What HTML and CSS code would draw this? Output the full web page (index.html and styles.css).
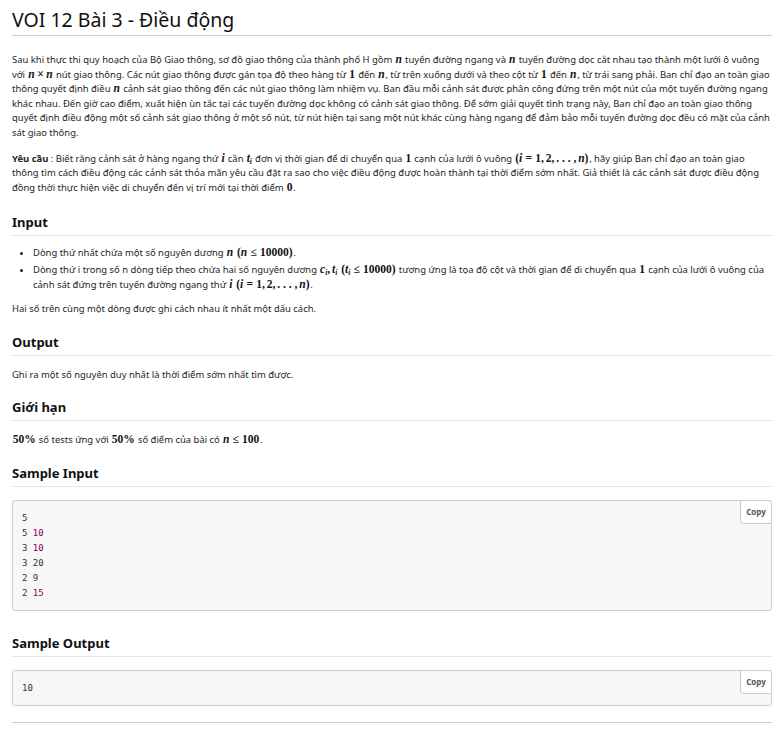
FILE: index.html
```html
<!DOCTYPE html>
<html lang="vi">
<head>
<meta charset="utf-8">
<title>VOI 12 Bài 3 - Điều động</title>
<link rel="stylesheet" href="styles.css">
</head>
<body>
<div class="page">
  <h1 class="title">VOI 12 Bài 3 - Điều động</h1>
  <div class="content">
    <p class="first">Sau khi thực thi quy hoạch của Bộ Giao thông, sơ đồ giao thông của thành phố H gồm <span class="math"><i>n</i></span> tuyến đường ngang và <span class="math"><i>n</i></span> tuyến đường dọc cắt nhau tạo thành một lưới ô vuông với <span class="math"><i>n</i><span class="bin">×</span><i>n</i></span> nút giao thông. Các nút giao thông được gán tọa độ theo hàng từ <span class="math">1</span> đến <span class="math"><i>n</i></span>, từ trên xuống dưới và theo cột từ <span class="math">1</span> đến <span class="math"><i>n</i></span>, từ trái sang phải. Ban chỉ đạo an toàn giao thông quyết định điều <span class="math"><i>n</i></span> cảnh sát giao thông đến các nút giao thông làm nhiệm vụ. Ban đầu mỗi cảnh sát được phân công đứng trên một nút của một tuyến đường ngang khác nhau. Đến giờ cao điểm, xuất hiện ùn tắc tại các tuyến đường dọc không có cảnh sát giao thông. Để sớm giải quyết tình trạng này, Ban chỉ đạo an toàn giao thông quyết định điều động một số cảnh sát giao thông ở một số nút, từ nút hiện tại sang một nút khác cùng hàng ngang để đảm bảo mỗi tuyến đường dọc đều có mặt của cảnh sát giao thông.</p>
    <p><b>Yêu cầu</b> : Biết rằng cảnh sát ở hàng ngang thứ <span class="math"><i>i</i></span> cần <span class="math"><i>t</i><sub><i>i</i></sub></span> đơn vị thời gian để di chuyển qua <span class="math">1</span> cạnh của lưới ô vuông <span class="math">(<i>i</i><span class="rel">=</span>1,<span class="th"></span>2,<span class="th"></span>. . . ,<span class="th"></span><i>n</i>)</span>, hãy giúp Ban chỉ đạo an toàn giao thông tìm cách điều động các cảnh sát thỏa mãn yêu cầu đặt ra sao cho việc điều động được hoàn thành tại thời điểm sớm nhất. Giả thiết là các cảnh sát được điều động đồng thời thực hiện việc di chuyển đến vị trí mới tại thời điểm <span class="math">0</span>.</p>

    <h2 class="sect sect-first">Input</h2>
    <ul class="list">
      <li>Dòng thứ nhất chứa một số nguyên dương <span class="math"><i>n</i></span> <span class="math">(<i>n</i><span class="rel">≤</span>10000)</span>.</li>
      <li>Dòng thứ i trong số n dòng tiếp theo chứa hai số nguyên dương <span class="math"><i>c</i><sub><i>i</i></sub>,<span class="th"></span><i>t</i><sub><i>i</i></sub></span> <span class="math">(<i>t</i><sub><i>i</i></sub><span class="rel">≤</span>10000)</span> tương ứng là tọa độ cột và thời gian để di chuyển qua <span class="math">1</span> cạnh của lưới ô vuông của cảnh sát đứng trên tuyến đường ngang thứ <span class="math"><i>i</i></span> <span class="math">(<i>i</i><span class="rel">=</span>1,<span class="th"></span>2,<span class="th"></span>. . . ,<span class="th"></span><i>n</i>)</span>.</li>
    </ul>
    <p class="after-list">Hai số trên cùng một dòng được ghi cách nhau ít nhất một dấu cách.</p>

    <h2 class="sect">Output</h2>
    <p>Ghi ra một số nguyên duy nhất là thời điểm sớm nhất tìm được.</p>

    <h2 class="sect">Giới hạn</h2>
    <p><span class="math">50%</span> số tests ứng với <span class="math">50%</span> số điểm của bài có <span class="math"><i>n</i><span class="rel">≤</span>100</span>.</p>

    <h2 class="sect">Sample Input</h2>
    <div class="code">
      <pre>5
5 <span class="num">10</span>
3 <span class="num">10</span>
3 20
2 9
2 <span class="num">15</span></pre>
      <button class="copy">Copy</button>
    </div>

    <h2 class="sect sect-after-code">Sample Output</h2>
    <div class="code">
      <pre>10</pre>
      <button class="copy">Copy</button>
    </div>
    <hr class="end">
  </div>
</div>
</body>
</html>
```
FILE: styles.css
```css
html, body {
  margin: 0;
  padding: 0;
  background: #fff;
}
body {
  font-family: "Noto Sans", "Open Sans", sans-serif;
  color: #1e1e1e;
}
.page {
  padding: 0 12px;
  width: 760px;
}
.title {
  font-weight: 400;
  font-size: 19.5px;
  line-height: 28px;
  margin: 0;
  padding: 6px 0 1px 0;
  border-bottom: 1px solid #cccccc;
  color: #111;
}
.content {
  font-size: 9.45px;
  line-height: 14.6px;
}
.content p {
  margin: 11px 0 0 0;
}
.content p.first {
  margin-top: 17px;
}
.math {
  font-family: "Liberation Serif", "DejaVu Serif", serif;
  font-size: 11.5px;
  font-weight: 700;
  line-height: 1;
  white-space: nowrap;
  color: #111;
  margin: 0 0.7px;
}
.math i {
  font-style: italic;
}
.math sub {
  font-size: 7.5px;
  line-height: 0;
  vertical-align: -2px;
}
.rel {
  margin: 0 3.2px;
}
.bin {
  margin: 0 2.6px;
}
.th {
  display: inline-block;
  width: 1.9px;
}
.sect {
  font-size: 13px;
  font-weight: 700;
  line-height: 18px;
  margin: 16px 0 0 0;
  padding-bottom: 4px;
  border-bottom: 1px solid #e5e5e5;
  color: #111;
}
.sect-first {
  margin-top: 18px;
}
.sect-after-code {
  margin-top: 23px;
}
.content .sect + p {
  margin-top: 12px;
}
.list {
  margin: 10px 0 0 0;
  padding-left: 21px;
}
.list li {
  margin: 0 0 2px 0;
}
.content p.after-list {
  margin-top: 10px;
}
.code {
  position: relative;
  margin-top: 13px;
  background: #f7f7f7;
  border: 1px solid #cccccc;
  border-radius: 3px;
}
.code pre {
  margin: 0;
  padding: 10px 9px 9px 9px;
  font-family: "DejaVu Sans Mono", "Liberation Mono", monospace;
  font-size: 9px;
  line-height: 15px;
  color: #333;
}
.num {
  color: #800060;
}
.copy {
  position: absolute;
  top: -1px;
  right: -1px;
  width: 32px;
  height: 24px;
  background: #fff;
  border: 1px solid #cccccc;
  border-radius: 0 3px 0 3px;
  font-family: "Open Sans", "Noto Sans", sans-serif;
  font-size: 8px;
  font-weight: 700;
  color: #555;
  padding: 0;
  line-height: 12px;
}
.end {
  border: 0;
  border-top: 1px solid #cccccc;
  margin: 16px 0 0 0;
}
```
